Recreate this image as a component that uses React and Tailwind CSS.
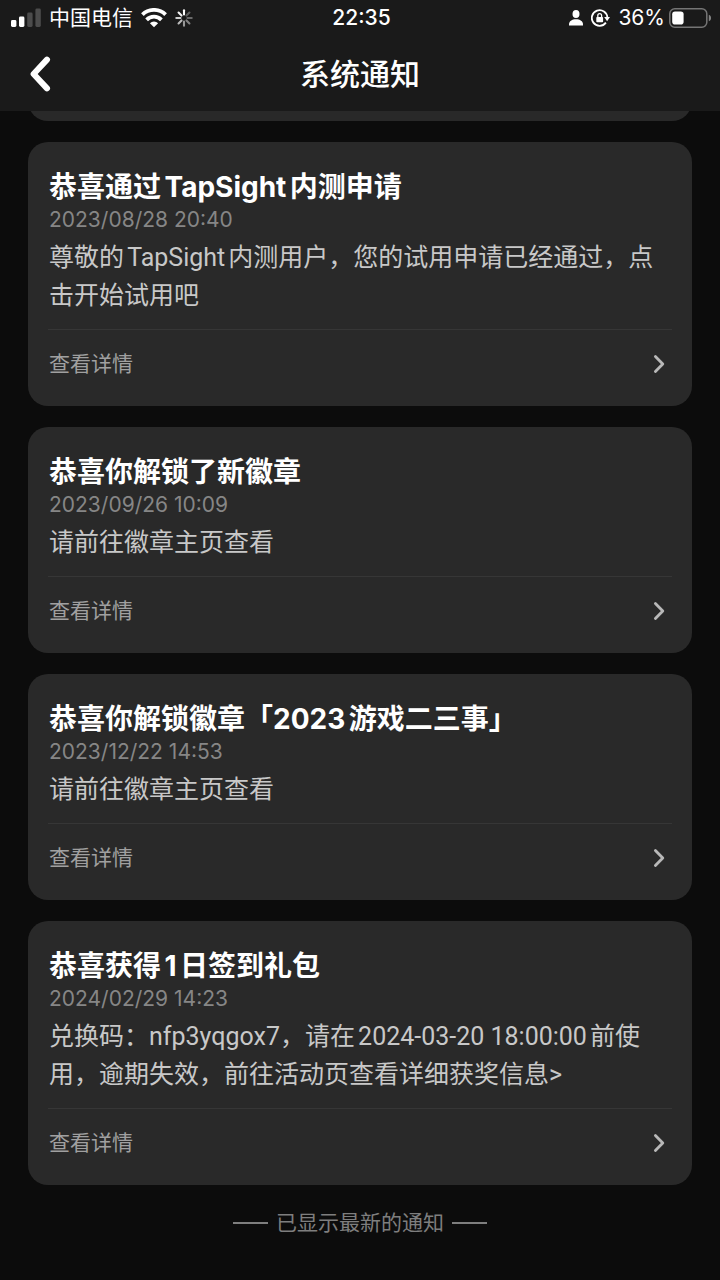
import React from 'react';

const notifications = [
  {
    id: 1,
    title: '恭喜通过TapSight内测申请',
    date: '2023/08/28 20:40',
    body: '尊敬的TapSight内测用户，您的试用申请已经通过，点击开始试用吧',
  },
  {
    id: 2,
    title: '恭喜你解锁了新徽章',
    date: '2023/09/26 10:09',
    body: '请前往徽章主页查看',
  },
  {
    id: 3,
    title: '恭喜你解锁徽章「2023游戏二三事」',
    date: '2023/12/22 14:53',
    body: '请前往徽章主页查看',
  },
  {
    id: 4,
    title: '恭喜获得1日签到礼包',
    date: '2024/02/29 14:23',
    body: '兑换码：nfp3yqgox7，请在2024-03-20 18:00:00前使用，逾期失效，前往活动页查看详细获奖信息>',
  },
];

function SignalIcon() {
  return (
    <svg width="30" height="20" viewBox="0 0 30 20" fill="#fff" aria-hidden="true">
      <rect x="0" y="12" width="5.4" height="7" rx="1.4" />
      <rect x="8" y="8.5" width="5.4" height="10.5" rx="1.4" />
      <rect x="16.2" y="4.5" width="5.4" height="14.5" rx="1.4" opacity="0.22" />
      <rect x="24.4" y="0.5" width="5.4" height="18.5" rx="1.4" opacity="0.22" />
    </svg>
  );
}

function WifiIcon() {
  return (
    <svg width="26" height="20" viewBox="0 0 26 20" fill="none" stroke="#fff" strokeWidth="3.8" aria-hidden="true">
      <path d="M1.4 6.6a16.6 16.6 0 0 1 23.2 0" />
      <path d="M5.6 11.8a10.4 10.4 0 0 1 14.8 0" />
      <path d="M13 19.2l-4.1-4a5.7 5.7 0 0 1 8.2 0z" fill="#fff" stroke="none" />
    </svg>
  );
}

const spokes = [
  { angle: 0, opacity: 1 },
  { angle: 45, opacity: 0.3 },
  { angle: 90, opacity: 0.35 },
  { angle: 135, opacity: 0.45 },
  { angle: 180, opacity: 0.55 },
  { angle: 225, opacity: 0.7 },
  { angle: 270, opacity: 0.8 },
  { angle: 315, opacity: 0.95 },
];

function SpinnerIcon() {
  return (
    <svg width="18" height="18" viewBox="0 0 18 18" stroke="#fff" strokeWidth="2.1" strokeLinecap="round" aria-hidden="true">
      {spokes.map((s) => (
        <path key={s.angle} d="M9 1.3v4.2" opacity={s.opacity} transform={`rotate(${s.angle} 9 9)`} />
      ))}
    </svg>
  );
}

function PersonIcon() {
  return (
    <svg width="14" height="16" viewBox="0 0 14 16" fill="#fff" aria-hidden="true">
      <ellipse cx="7" cy="4" rx="3.5" ry="3.9" />
      <path d="M0 15.5v-1.2C0 11.2 3 9.2 7 9.2s7 2 7 5.1v1.2z" />
    </svg>
  );
}

function RotationLockIcon() {
  return (
    <svg width="19" height="18" viewBox="0 0 19 18" fill="none" aria-hidden="true">
      <path d="M14.9 13.6A7.8 7.8 0 1 1 16.4 8.6" stroke="#fff" strokeWidth="1.8" />
      <path d="M13.2 8h5.8l-2.9 4.2z" fill="#fff" />
      <rect x="5.3" y="7.9" width="6.8" height="5.3" rx="0.8" fill="#fff" />
      <path d="M6.8 8.2V6.5a1.9 1.9 0 0 1 3.8 0v1.7" stroke="#fff" strokeWidth="1.3" />
    </svg>
  );
}

function BatteryIcon() {
  return (
    <svg width="43" height="20" viewBox="0 0 43 20" fill="none" aria-hidden="true">
      <rect x="0.8" y="0.8" width="37" height="18.4" rx="5" stroke="#fff" strokeOpacity="0.4" strokeWidth="1.5" />
      <rect x="3.2" y="3.4" width="11.4" height="13.2" rx="2.8" fill="#fff" />
      <path d="M39.8 6.7c3 .9 3 5.7 0 6.6z" fill="#fff" fillOpacity="0.45" />
    </svg>
  );
}

function StatusBar() {
  return (
    <div className="grid h-9 grid-cols-[1fr_auto_1fr] items-center pr-2 pl-[11px] text-[21px] leading-9">
      <div className="flex items-center gap-2">
        <SignalIcon />
        <span>中国电信</span>
        <WifiIcon />
        <SpinnerIcon />
      </div>
      <time className="font-medium">22:35</time>
      <div className="flex items-center justify-end gap-2">
        <PersonIcon />
        <RotationLockIcon />
        <div className="flex items-center gap-1">
          <span>36%</span>
          <BatteryIcon />
        </div>
      </div>
    </div>
  );
}

function NavBar() {
  return (
    <div className="grid h-[75px] grid-cols-[1fr_auto_1fr] items-center px-[30px]">
      <button type="button" aria-label="返回" className="justify-self-start">
        <svg width="21" height="36" viewBox="0 0 21 36" fill="none" stroke="#fff" strokeWidth="6" strokeLinecap="round" strokeLinejoin="round">
          <path d="M17 3.6L3.6 18 17 32.4" />
        </svg>
      </button>
      <h1 className="text-[30px] leading-10 font-medium">系统通知</h1>
    </div>
  );
}

function NotificationCard({ title, date, body }) {
  return (
    <article className="rounded-[20px] bg-[#292929] px-5 pt-[25px] pb-2">
      <div className="px-px">
        <h2 className="text-[28px] leading-10 font-bold text-white">{title}</h2>
        <time className="block text-[21px] leading-[26px] text-[#868686]">{date}</time>
        <p className="mt-[6px] font-['Roboto','Noto_Sans_CJK_SC',sans-serif] text-[25px] leading-[38px] text-[#c8c8c8]">{body}</p>
      </div>
      <a href="#" className="mt-[14px] flex h-[69px] items-center justify-between border-t border-[#363636] pr-[7px] pl-px text-[21px] text-[#a0a0a0]">
        查看详情
        <svg width="12" height="20" viewBox="0 0 12 20" fill="none" stroke="#b8b8b8" strokeWidth="2.8" strokeLinecap="round" strokeLinejoin="round" aria-hidden="true">
          <path d="M2.4 2.4L9.8 10l-7.4 7.6" />
        </svg>
      </a>
    </article>
  );
}

export default function App() {
  return (
    <div className="min-h-screen bg-[#0c0c0c] font-['Inter','Noto_Sans_CJK_SC',sans-serif] text-white [text-autospace:normal]" lang="zh-CN">
      <header className="bg-[#1a1a1a]">
        <StatusBar />
        <NavBar />
      </header>

      <main className="px-7">
        {/* tail of the card scrolled under the header */}
        <div className="flex h-[10px] items-end overflow-hidden">
          <div className="h-10 w-full shrink-0 rounded-[20px] bg-[#292929]" />
        </div>

        <div className="mt-[21px] flex flex-col gap-[21px]">
          {notifications.map((item) => (
            <NotificationCard key={item.id} title={item.title} date={item.date} body={item.body} />
          ))}
        </div>

        <div className="flex items-center justify-center gap-2 py-5 text-[21px] leading-9 text-[#7e7e7e]">
          <span className="h-[2px] w-[35px] bg-[#7e7e7e]" />
          已显示最新的通知
          <span className="h-[2px] w-[35px] bg-[#7e7e7e]" />
        </div>
      </main>
    </div>
  );
}
